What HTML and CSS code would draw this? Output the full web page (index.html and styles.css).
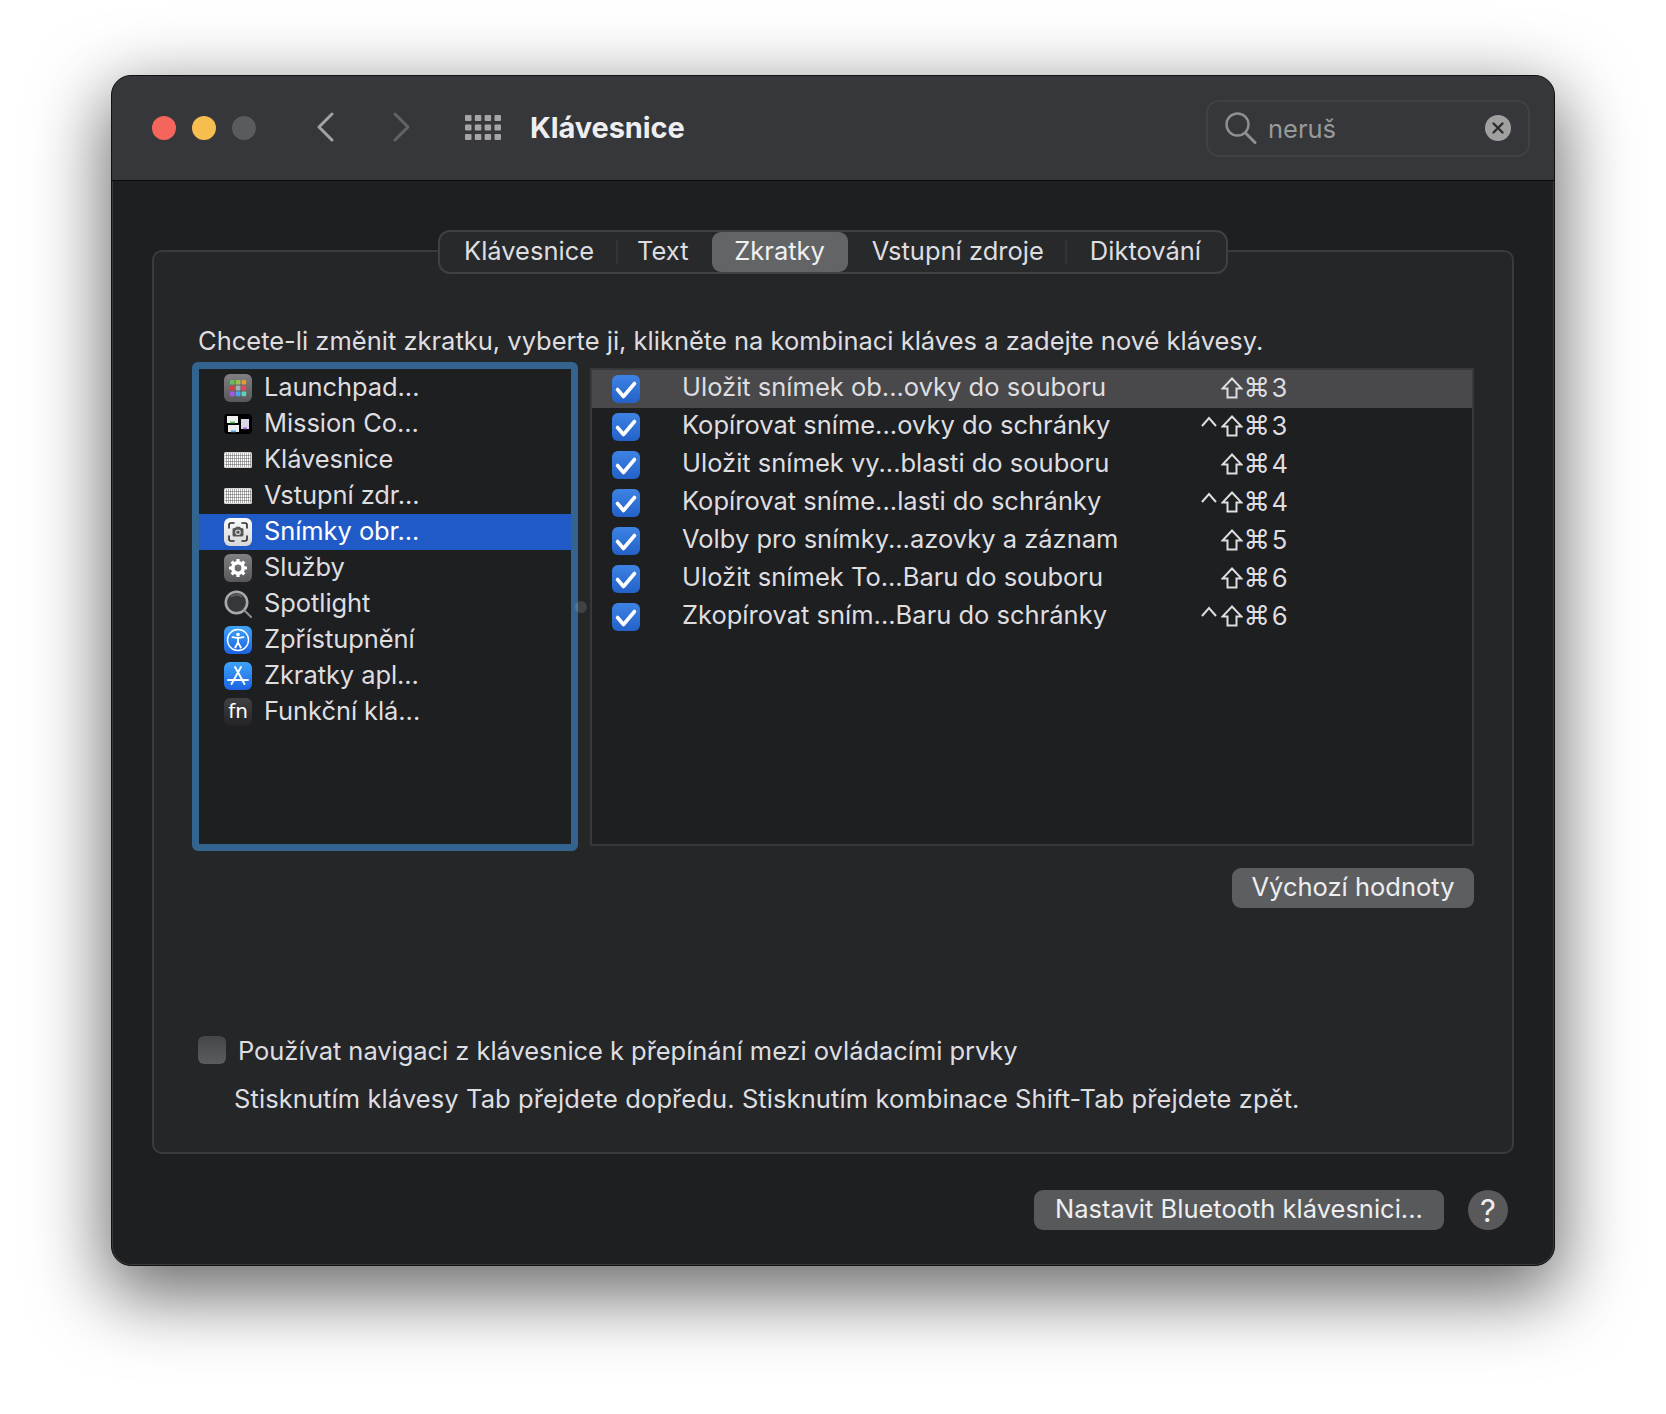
FILE: index.html
```html
<!DOCTYPE html>
<html lang="cs">
<head>
<meta charset="utf-8">
<title>Klávesnice</title>
<link rel="stylesheet" href="styles.css">
</head>
<body>
<svg class="defs" width="0" height="0" aria-hidden="true">
  <defs>
    <linearGradient id="g-check" x1="0" y1="0" x2="0" y2="1"><stop offset="0" stop-color="#3d83e4"/><stop offset="1" stop-color="#2461c8"/></linearGradient>
    <linearGradient id="g-gray" x1="0" y1="0" x2="0" y2="1"><stop offset="0" stop-color="#808082"/><stop offset="1" stop-color="#58585a"/></linearGradient>
    <linearGradient id="g-blue" x1="0" y1="0" x2="0" y2="1"><stop offset="0" stop-color="#3ea3fa"/><stop offset="1" stop-color="#1b63e2"/></linearGradient>
    <linearGradient id="g-white" x1="0" y1="0" x2="0" y2="1"><stop offset="0" stop-color="#fafafa"/><stop offset="1" stop-color="#d8d8d8"/></linearGradient>
    <pattern id="p-keys" x="1" y="7" width="2" height="3" patternUnits="userSpaceOnUse"><rect width="2" height="3" fill="#5e5e5e"/><rect width="1.500" height="2.500" fill="#ffffff"/></pattern>
    <symbol id="i-check" viewBox="0 0 28 28">
      <rect width="28" height="28" rx="6" fill="url(#g-check)"/>
      <path d="M5.500 14.500 11.500 21.500 22.500 8.500" fill="none" stroke="#fff" stroke-width="3.600" stroke-linecap="round" stroke-linejoin="round"/>
    </symbol>
    <symbol id="i-keyboard" viewBox="0 0 28 28">
      <rect x="0" y="6" width="28" height="16" rx="1.500" fill="#d4d4d4"/>
      <rect x="1" y="7" width="26" height="14" fill="url(#p-keys)"/>
    </symbol>
    <symbol id="i-shift" viewBox="0 0 22 22">
      <path d="M11 1.500 20.500 11.500H15.500V20.500H6.500V11.500H1.500Z" fill="none" stroke="#dedee0" stroke-width="2" stroke-linejoin="miter"/>
    </symbol>
    <symbol id="i-ctrl" viewBox="0 0 16 11">
      <path d="M1 10 8 2l7 8" fill="none" stroke="#dedee0" stroke-width="2"/>
    </symbol>
  </defs>
</svg>
<main class="stage">
  <div class="window">
    <header class="titlebar">
      <div class="lights">
        <span class="light red"></span>
        <span class="light yellow"></span>
        <span class="light gray"></span>
      </div>
      <svg class="chev" width="19" height="30" viewBox="0 0 19 30"><path d="M16 2 3 15l13 13" fill="none" stroke="#a2a2a3" stroke-width="3" stroke-linecap="round" stroke-linejoin="round"/></svg>
      <svg class="chev next" width="19" height="30" viewBox="0 0 19 30"><path d="M3 2l13 13L3 28" fill="none" stroke="#626365" stroke-width="3" stroke-linecap="round" stroke-linejoin="round"/></svg>
      <svg class="grid-icon" width="36" height="25" viewBox="0 0 36 25" fill="#a5a5a6">
        <rect width="6.500" height="6" rx="1"/><rect x="9.800" width="6.500" height="6" rx="1"/><rect x="19.600" width="6.500" height="6" rx="1"/><rect x="29.500" width="6.500" height="6" rx="1"/>
        <rect y="9.500" width="6.500" height="6" rx="1"/><rect x="9.800" y="9.500" width="6.500" height="6" rx="1"/><rect x="19.600" y="9.500" width="6.500" height="6" rx="1"/><rect x="29.500" y="9.500" width="6.500" height="6" rx="1"/>
        <rect y="19" width="6.500" height="6" rx="1"/><rect x="9.800" y="19" width="6.500" height="6" rx="1"/><rect x="19.600" y="19" width="6.500" height="6" rx="1"/><rect x="29.500" y="19" width="6.500" height="6" rx="1"/>
      </svg>
      <h1 class="title">Klávesnice</h1>
      <div class="search">
        <svg width="32" height="32" viewBox="0 0 32 32"><circle cx="12.500" cy="12.500" r="11" fill="none" stroke="#8f9091" stroke-width="2.400"/><path d="M20.500 21 30 30.500" stroke="#8f9091" stroke-width="3" stroke-linecap="round"/></svg>
        <span class="search-text">neruš</span>
        <svg class="clear" width="26" height="26" viewBox="0 0 26 26"><circle cx="13" cy="13" r="13" fill="#a0a0a1"/><path d="M8.500 8.500l9 9m0-9-9 9" stroke="#2b2c2e" stroke-width="2.400" stroke-linecap="round"/></svg>
      </div>
    </header>

    <div class="content">
      <nav class="tabs">
        <span class="tab">Klávesnice</span><i class="tab-sep"></i>
        <span class="tab t2">Text</span>
        <span class="tab t3 active">Zkratky</span>
        <span class="tab t4">Vstupní zdroje</span><i class="tab-sep"></i>
        <span class="tab t5">Diktování</span>
      </nav>

      <section class="panel">
        <p class="intro">Chcete-li změnit zkratku, vyberte ji, klikněte na kombinaci kláves a zadejte nové klávesy.</p>
        <div class="columns">
          <ul class="cats">
            <li class="cat">
              <svg class="ico" viewBox="0 0 28 28"><rect width="28" height="28" rx="6" fill="url(#g-gray)"/>
                <rect x="6" y="6" width="4.600" height="4.600" rx="1" fill="#5fc25f"/><rect x="11.800" y="6" width="4.600" height="4.600" rx="1" fill="#9fc04e"/><rect x="17.600" y="6" width="4.600" height="4.600" rx="1" fill="#e59a35"/>
                <rect x="6" y="11.800" width="4.600" height="4.600" rx="1" fill="#d8403c"/><rect x="11.800" y="11.800" width="4.600" height="4.600" rx="1" fill="#9fb3bd"/><rect x="17.600" y="11.800" width="4.600" height="4.600" rx="1" fill="#e2475f"/>
                <rect x="6" y="17.600" width="4.600" height="4.600" rx="1" fill="#a25ae0"/><rect x="11.800" y="17.600" width="4.600" height="4.600" rx="1" fill="#4aa4ec"/><rect x="17.600" y="17.600" width="4.600" height="4.600" rx="1" fill="#5fcfb8"/></svg>
              <span class="label">Launchpad...</span>
            </li>
            <li class="cat">
              <svg class="ico" viewBox="0 0 28 28"><rect y="4" width="28" height="20" rx="4" fill="#000"/>
                <rect x="3" y="6" width="11" height="7" fill="#f0f0f0"/><rect x="6" y="11.500" width="5" height="1.800" fill="#5fc85f"/>
                <rect x="4" y="15" width="11" height="7" fill="#eeeeee"/><rect x="7" y="20.500" width="5" height="1.800" fill="#4aa8ea"/>
                <rect x="17" y="9" width="8" height="10" fill="#dcd9e6"/><rect x="19" y="17.500" width="4" height="1.800" fill="#a86ae0"/></svg>
              <span class="label">Mission Co...</span>
            </li>
            <li class="cat">
              <svg class="ico"><use href="#i-keyboard"/></svg>
              <span class="label">Klávesnice</span>
            </li>
            <li class="cat">
              <svg class="ico"><use href="#i-keyboard"/></svg>
              <span class="label">Vstupní zdr...</span>
            </li>
            <li class="cat selected">
              <svg class="ico" viewBox="0 0 28 28"><rect width="28" height="28" rx="6" fill="url(#g-white)"/>
                <path d="M5 10V7a2 2 0 0 1 2-2h3M18 5h3a2 2 0 0 1 2 2v3M23 18v3a2 2 0 0 1-2 2h-3M10 23H7a2 2 0 0 1-2-2v-3" fill="none" stroke="#2a2a2a" stroke-width="1.600" stroke-linecap="round"/>
                <rect x="8.500" y="10" width="11" height="8.500" rx="1.600" fill="#55565a"/><rect x="11.500" y="8.800" width="5" height="2" rx=".8" fill="#55565a"/><circle cx="14" cy="14.200" r="2.800" fill="#d8d8d8"/><circle cx="14" cy="14.200" r="1.600" fill="#55565a"/></svg>
              <span class="label">Snímky obr...</span>
            </li>
            <li class="cat">
              <svg class="ico" viewBox="0 0 28 28"><rect width="28" height="28" rx="6" fill="url(#g-gray)"/>
                <circle cx="14" cy="14" r="5.200" fill="none" stroke="#fff" stroke-width="3.600"/>
                <g stroke="#fff" stroke-width="3.200"><path d="M14 5v4M14 19v4M5 14h4M19 14h4M7.700 7.700l2.800 2.800M17.500 17.500l2.800 2.800M20.300 7.700l-2.800 2.800M10.500 17.500l-2.800 2.800"/></g></svg>
              <span class="label">Služby</span>
            </li>
            <li class="cat">
              <svg class="ico" viewBox="0 0 28 28"><circle cx="12.500" cy="12.500" r="10.700" fill="#34383a" stroke="#a8a9aa" stroke-width="2.600"/><path d="M7 7a8 8 0 0 1 11 0" fill="none" stroke="#62666a" stroke-width="1.400"/><path d="M20.500 20.500 27 27" stroke="#8d8e8f" stroke-width="2" stroke-linecap="round"/></svg>
              <span class="label">Spotlight</span>
            </li>
            <li class="cat">
              <svg class="ico" viewBox="0 0 28 28"><rect width="28" height="28" rx="6" fill="url(#g-blue)"/><circle cx="14" cy="14" r="10.500" fill="none" stroke="#fff" stroke-width="1.400"/><circle cx="14" cy="8.600" r="1.800" fill="#fff"/><path d="M8.500 11.200c3.500 1 7.500 1 11 0M14 12v5M14 16.500 11.200 21.500M14 16.500l2.800 5" fill="none" stroke="#fff" stroke-width="1.900" stroke-linecap="round"/></svg>
              <span class="label">Zpřístupnění</span>
            </li>
            <li class="cat">
              <svg class="ico" viewBox="0 0 28 28"><rect width="28" height="28" rx="6" fill="url(#g-blue)"/><path d="M11 5 20.500 22M17 5 7.500 22M4 18h20" fill="none" stroke="#fff" stroke-width="1.900" stroke-linecap="round"/></svg>
              <span class="label">Zkratky apl...</span>
            </li>
            <li class="cat">
              <span class="fn">fn</span>
              <span class="label">Funkční klá...</span>
            </li>
          </ul>
          <div class="splitter"><i class="split-dot"></i></div>
          <ul class="shortcuts">
            <li class="row current"><svg class="check"><use href="#i-check"/></svg><span class="name">Uložit snímek ob...ovky do souboru</span><span class="keys"><svg class="k-shift"><use href="#i-shift"/></svg><b>⌘</b>3</span></li>
            <li class="row"><svg class="check"><use href="#i-check"/></svg><span class="name">Kopírovat sníme...ovky do schránky</span><span class="keys"><svg class="k-ctrl"><use href="#i-ctrl"/></svg><svg class="k-shift"><use href="#i-shift"/></svg><b>⌘</b>3</span></li>
            <li class="row"><svg class="check"><use href="#i-check"/></svg><span class="name">Uložit snímek vy...blasti do souboru</span><span class="keys"><svg class="k-shift"><use href="#i-shift"/></svg><b>⌘</b>4</span></li>
            <li class="row"><svg class="check"><use href="#i-check"/></svg><span class="name">Kopírovat sníme...lasti do schránky</span><span class="keys"><svg class="k-ctrl"><use href="#i-ctrl"/></svg><svg class="k-shift"><use href="#i-shift"/></svg><b>⌘</b>4</span></li>
            <li class="row"><svg class="check"><use href="#i-check"/></svg><span class="name">Volby pro snímky...azovky a záznam</span><span class="keys"><svg class="k-shift"><use href="#i-shift"/></svg><b>⌘</b>5</span></li>
            <li class="row"><svg class="check"><use href="#i-check"/></svg><span class="name">Uložit snímek To...Baru do souboru</span><span class="keys"><svg class="k-shift"><use href="#i-shift"/></svg><b>⌘</b>6</span></li>
            <li class="row"><svg class="check"><use href="#i-check"/></svg><span class="name">Zkopírovat sním...Baru do schránky</span><span class="keys"><svg class="k-ctrl"><use href="#i-ctrl"/></svg><svg class="k-shift"><use href="#i-shift"/></svg><b>⌘</b>6</span></li>
          </ul>
        </div>
        <div class="defaults"><button class="btn" type="button">Výchozí hodnoty</button></div>
        <label class="navcheck"><span class="box"></span><span class="navtext">Používat navigaci z klávesnice k přepínání mezi ovládacími prvky</span></label>
        <p class="hint">Stisknutím klávesy Tab přejdete dopředu. Stisknutím kombinace Shift-Tab přejdete zpět.</p>
      </section>

      <footer class="footer">
        <button class="btn wide" type="button">Nastavit Bluetooth klávesnici...</button>
        <button class="help" type="button">?</button>
      </footer>
    </div>
  </div>
</main>
</body>
</html>
```

FILE: styles.css
```css
* { box-sizing: border-box; }
html, body { margin: 0; padding: 0; background: #fff; }
body {
  font-family: Inter, "Noto Sans", "Liberation Sans", sans-serif;
  font-size: 25.5px;
  color: #dedee0;
  overflow: hidden;
}
.defs { position: absolute; }
ul { list-style: none; margin: 0; padding: 0; }
p { margin: 0; }
.stage { padding: 75px 0 148px 111px; height: 1414px; }

.window {
  width: 1444px;
  height: 1191px;
  border-radius: 20px;
  background: #1e1f21;
  overflow: hidden;
  border: 1px solid #111;
  box-shadow: 0 24px 72px 6px rgba(0,0,0,.58), inset 0 0 0 1px rgba(255,255,255,.12);
  isolation: isolate;
}
.titlebar {
  height: 105px;
  background: #36373a;
  border-bottom: 1px solid #0c0c0d;
  display: flex;
  align-items: center;
  padding: 0 24px 0 40px;
}
.lights { display: flex; gap: 16px; margin-right: 60px; }
.light { width: 24px; height: 24px; border-radius: 50%; }
.red { background: #f4665c; }
.yellow { background: #f6bd4f; }
.gray { background: #5a5b5d; }
.chev { display: block; margin-top: -2px; }
.next { margin-left: 57px; }
.grid-icon { margin-left: 54px; margin-top: -2px; }
.title { margin: -2px 0 0 29px; font-size: 29px; font-weight: 650; color: #eeeef0; letter-spacing: -.1px; }
.search {
  margin-left: auto;
  width: 324px;
  height: 57px;
  border: 2px solid #404144;
  border-radius: 13px;
  display: flex;
  align-items: center;
  padding: 0 17px 0 17px;
  color: #98999a;
}
.search-text { margin-left: 11px; }
.clear { margin-left: auto; }

.content { padding: 49px 40px 0 40px; display: flex; flex-direction: column; }
.tabs {
  align-self: center;
  position: relative;
  z-index: 1;
  height: 44px;
  width: 790px;
  margin-bottom: -24px;
  background: #28292b;
  border: 2px solid #404143;
  border-radius: 12px;
  display: flex;
  align-items: center;
  padding-left: 24px;
}
.tab { height: 40px; line-height: 38px; white-space: nowrap; }
.tab-sep { width: 2px; height: 24px; background: #333436; margin: 0 21.5px; }
.t2 { margin-left: -2px; margin-right: 23px; }
.t3 { margin-right: 24px; }
.t5 { margin-left: 1px; }
.active {
  background: #636466;
  border-radius: 9px;
  width: 136px;
  text-align: center;
  color: #f0f0f2;
}

.panel {
  height: 904px;
  background: #252628;
  border: 2px solid #3a3b3d;
  border-radius: 10px;
  padding: 71px 38px 0 38px;
}
.intro { height: 36px; line-height: 36px; padding-left: 6px; white-space: nowrap; }
.columns { display: flex; margin-top: 3px; }
.cats {
  width: 386px;
  height: 489px;
  background: #1e1f21;
  border: 7px solid #33648f;
  border-radius: 6px;
  padding-top: 1px;
}
.cat {
  height: 36px;
  display: flex;
  align-items: center;
  gap: 12px;
  padding-left: 25px;
  white-space: nowrap;
}
.label { margin-top: -4px; letter-spacing: -.08px; }
.selected { background: #1f5ac6; color: #fff; }
.ico { width: 28px; height: 28px; display: block; flex: none; }
.fn {
  width: 28px;
  height: 28px;
  flex: none;
  border-radius: 6px;
  background: linear-gradient(#414143, #232325);
  color: #fff;
  font-size: 20px;
  line-height: 27px;
  text-align: center;
  font-family: "DejaVu Sans", sans-serif;
}
.splitter { width: 12px; flex: none; display: flex; align-items: center; }
.split-dot { width: 12px; height: 12px; margin-left: -3px; border-radius: 50%; background: rgba(255,255,255,.13); }
.shortcuts {
  flex: 1;
  height: 478px;
  margin-top: 6px;
  background: #1e1f21;
  border: 2px solid #37383a;
}
.row {
  height: 38px;
  display: flex;
  align-items: center;
  padding-left: 20px;
  gap: 42px;
  white-space: nowrap;
}
.current { background: #49494b; }
.check { width: 28px; height: 28px; flex: none; }
.name { width: 464px; margin-top: -6px; }
.keys { width: 100px; display: flex; justify-content: flex-end; align-items: center; margin-top: -3px; font-variant-numeric: tabular-nums; }
.keys b { font-weight: 400; font-family: "DejaVu Sans", sans-serif; font-size: 26.5px; margin: 0 1.5px 0 .5px; }
.k-shift { width: 22px; height: 22px; flex: none; }
.k-ctrl { width: 16px; height: 11px; flex: none; margin: -8px 4px 0 0; }

.defaults { display: flex; justify-content: flex-end; margin-top: 17px; }
.btn {
  height: 40px;
  padding: 0 0 4px;
  width: 242px;
  border: 0;
  border-radius: 9px;
  background: #5d5e60;
  color: #eeeef0;
  font: inherit;
}
.wide { width: 410px; background: #58595b; }
.navcheck { display: flex; align-items: center; gap: 12px; margin-top: 128px; margin-left: 6px; height: 28px; white-space: nowrap; }
.navtext { letter-spacing: -.05px; }
.box { width: 28px; height: 28px; border-radius: 6px; background: linear-gradient(#454648, #5b5c5e); }
.hint { height: 36px; line-height: 36px; margin-top: 17px; padding-left: 42px; white-space: nowrap; letter-spacing: .09px; }

.footer { display: flex; justify-content: flex-end; gap: 24px; margin-top: 36px; padding-right: 6px; }
.help {
  width: 40px;
  height: 40px;
  border: 0;
  border-radius: 50%;
  background: #59595b;
  color: #eeeef0;
  font: inherit;
  font-size: 31px;
  font-weight: 400;
  padding: 0;
}
```
